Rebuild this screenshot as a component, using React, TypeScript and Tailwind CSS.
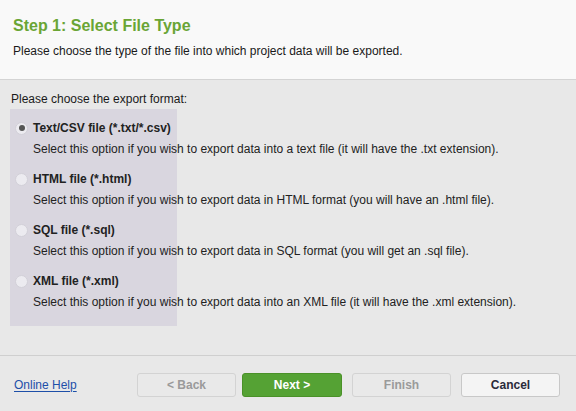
import React, { useState } from "react";

const OPTIONS = [
  {
    id: "csv",
    label: "Text/CSV file (*.txt/*.csv)",
    desc: "Select this option if you wish to export data into a text file (it will have the .txt extension).",
  },
  {
    id: "html",
    label: "HTML file (*.html)",
    desc: "Select this option if you wish to export data in HTML format (you will have an .html file).",
  },
  {
    id: "sql",
    label: "SQL file (*.sql)",
    desc: "Select this option if you wish to export data in SQL format (you will get an .sql file).",
  },
  {
    id: "xml",
    label: "XML file (*.xml)",
    desc: "Select this option if you wish to export data into an XML file (it will have the .xml extension).",
  },
];

const Radio: React.FC<{ checked: boolean }> = ({ checked }) => (
  <span className="w-[13px] h-[13px] rounded-full bg-[#ecebf0] border border-[#d2d0d8] flex items-center justify-center shrink-0">
    {checked && <span className="w-[6px] h-[6px] rounded-full bg-[#555]" />}
  </span>
);

export default function App() {
  const [format, setFormat] = useState("csv");

  return (
    <div className="w-[576px] h-[411px] bg-[#e8e8e8] flex flex-col text-[12px] text-[#1a1a1a] font-['Liberation_Sans',Arial,sans-serif] overflow-hidden">
      {/* Header */}
      <div className="h-[80px] bg-[#f9f9f9] border-b border-[#d4d4d4] px-[13px] pt-[16px] shrink-0">
        <h1 className="text-[16px] font-bold text-[#6aa535] leading-[20px]">
          Step 1: Select File Type
        </h1>
        <p className="mt-[7px] leading-[16px]">
          Please choose the type of the file into which project data will be exported.
        </p>
      </div>

      {/* Body */}
      <div className="flex-1 px-[10px] pt-[11px]">
        <p className="leading-[16px] pl-[1px]">Please choose the export format:</p>
        <div className="relative mt-[2px]">
          <div className="absolute left-0 top-0 w-[167px] h-[217px] bg-[#d9d6df]" />
          <div className="relative flex flex-col pt-[11px]">
            {OPTIONS.map((o) => (
              <div key={o.id} className="h-[51px] cursor-pointer" onClick={() => setFormat(o.id)}>
                <div className="flex items-center gap-[5px] pl-[5px] h-[16px]">
                  <Radio checked={format === o.id} />
                  <span className="font-bold text-[#222] leading-[16px]">{o.label}</span>
                </div>
                <p className="pl-[23px] mt-[5px] leading-[16px] text-[#222]">{o.desc}</p>
              </div>
            ))}
          </div>
        </div>
      </div>

      {/* Footer */}
      <div className="h-[56px] border-t border-[#cfcfcf] flex items-center px-[14px] pt-[2px] shrink-0">
        <a href="#" className="text-[#1d4fa8] underline underline-offset-2 leading-[16px]">
          Online Help
        </a>
        <div className="ml-auto flex gap-[10px] pr-[2px]">
          <button disabled className="w-[99px] h-[24px] rounded-[3px] border border-[#d3d3d3] bg-[#e9e9e9] text-[#9a9a9a] font-bold">
            &lt; Back
          </button>
          <button className="w-[100px] h-[24px] rounded-[3px] border border-[#4a9128] bg-[#55a234] text-white font-bold -ml-[4px]">
            Next &gt;
          </button>
          <button disabled className="w-[99px] h-[24px] rounded-[3px] border border-[#d3d3d3] bg-[#e9e9e9] text-[#9a9a9a] font-bold">
            Finish
          </button>
          <button className="w-[99px] h-[24px] rounded-[3px] border border-[#c8c8c8] bg-[#f4f4f4] text-[#2a2a3a] font-bold">
            Cancel
          </button>
        </div>
      </div>
    </div>
  );
}
